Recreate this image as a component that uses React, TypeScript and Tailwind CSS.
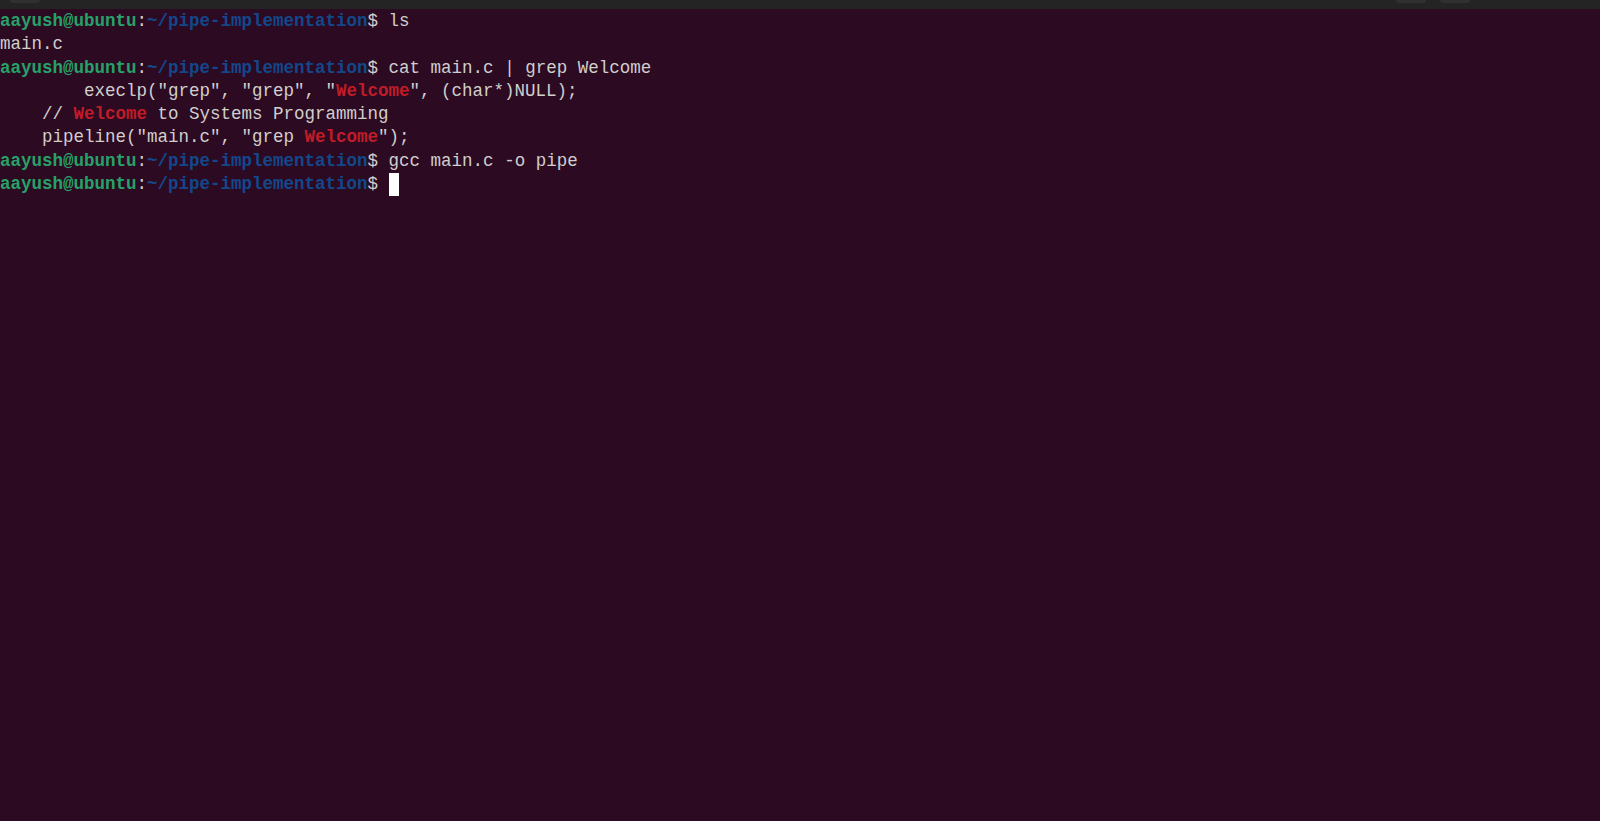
import React from 'react'

type Seg = { t: string; c?: string; b?: boolean }

const green = 'text-[#26a269]'
const blue = 'text-[#12488b]'
const red = 'text-[#c01c28]'

function Prompt({ cmd }: { cmd?: string }) {
  return (
    <>
      <span className={`${green} font-bold`}>aayush@ubuntu</span>
      <span>:</span>
      <span className={`${blue} font-bold`}>~/pipe-implementation</span>
      <span>$ </span>
      {cmd && <span>{cmd}</span>}
    </>
  )
}

const outputLines: Seg[][] = [
  [
    { t: '        execlp("grep", "grep", "' },
    { t: 'Welcome', c: red, b: true },
    { t: '", (char*)NULL);' },
  ],
  [{ t: '    // ' }, { t: 'Welcome', c: red, b: true }, { t: ' to Systems Programming' }],
  [{ t: '    pipeline("main.c", "grep ' }, { t: 'Welcome', c: red, b: true }, { t: '");' }],
]

function Line({ children }: { children: React.ReactNode }) {
  return <div className="h-[23.3px] leading-[23.3px] whitespace-pre">{children}</div>
}

export default function App() {
  return (
    <div className="w-[1600px] h-[821px] bg-[#2c0a22] overflow-hidden flex flex-col">
      <div className="h-[9px] bg-[#242424] flex items-start shrink-0">
        <div className="ml-[10px] w-[30px] h-[3px] bg-[#303030] rounded-b-sm" />
        <div className="ml-auto w-[30px] h-[3px] bg-[#303030] rounded-b-sm" />
        <div className="ml-[14px] mr-[130px] w-[30px] h-[3px] bg-[#303030] rounded-b-sm" />
      </div>
      <div
        className="pt-[1px] text-[#d0cfcc] text-[17.5px]"
        style={{ fontFamily: '"Liberation Mono", "DejaVu Sans Mono", monospace' }}
      >
        <Line>
          <Prompt cmd="ls" />
        </Line>
        <Line>main.c</Line>
        <Line>
          <Prompt cmd="cat main.c | grep Welcome" />
        </Line>
        {outputLines.map((segs, i) => (
          <Line key={i}>
            {segs.map((s, j) => (
              <span key={j} className={`${s.c ?? ''} ${s.b ? 'font-bold' : ''}`}>
                {s.t}
              </span>
            ))}
          </Line>
        ))}
        <Line>
          <Prompt cmd="gcc main.c -o pipe" />
        </Line>
        <Line>
          <Prompt />
          <span className="inline-block w-[10px] h-[23px] align-top bg-[#ffffff]" />
        </Line>
      </div>
    </div>
  )
}
